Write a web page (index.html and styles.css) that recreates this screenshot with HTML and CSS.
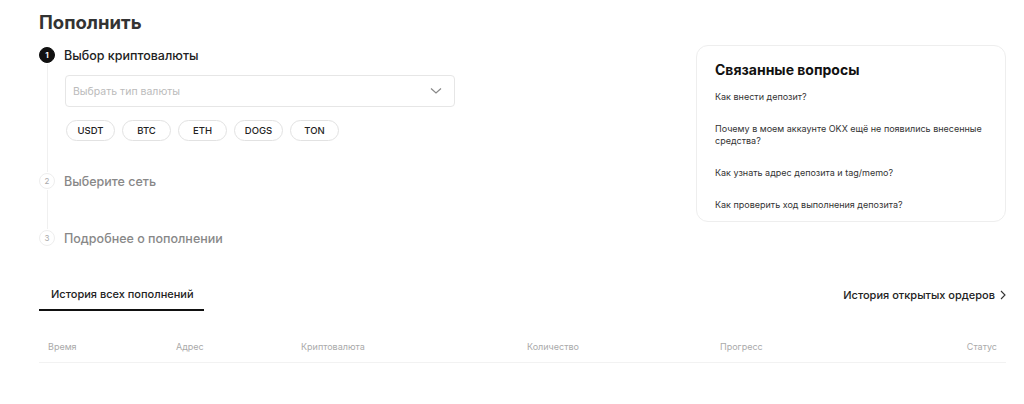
FILE: index.html
```html
<!DOCTYPE html>
<html lang="ru">
<head>
<meta charset="utf-8">
<link rel="stylesheet" href="styles.css">
</head>
<body>
<div class="page">
  <h1 class="title">Пополнить</h1>
  <div class="top">
    <div class="steps">
      <div class="step">
        <div class="step-head">
          <span class="num active">1</span>
          <span class="step-label active">Выбор криптовалюты</span>
        </div>
        <div class="step-body body1">
          <div class="select">
            <span class="placeholder">Выбрать тип валюты</span>
            <svg class="chev" width="12" height="8" viewBox="0 0 12 8"><path d="M1 1.5 L6 6 L11 1.5" fill="none" stroke="#888" stroke-width="1.2"/></svg>
          </div>
          <div class="chips">
            <span class="chip">USDT</span>
            <span class="chip">BTC</span>
            <span class="chip">ETH</span>
            <span class="chip">DOGS</span>
            <span class="chip">TON</span>
          </div>
        </div>
      </div>
      <div class="step">
        <div class="step-head">
          <span class="num">2</span>
          <span class="step-label">Выберите сеть</span>
        </div>
        <div class="step-body body2"></div>
      </div>
      <div class="step last">
        <div class="step-head">
          <span class="num">3</span>
          <span class="step-label">Подробнее о пополнении</span>
        </div>
      </div>
    </div>
    <div class="card">
      <h2 class="card-title">Связанные вопросы</h2>
      <a class="q">Как внести депозит?</a>
      <a class="q">Почему в моем аккаунте OKX ещё не появились внесенные средства?</a>
      <a class="q">Как узнать адрес депозита и tag/memo?</a>
      <a class="q">Как проверить ход выполнения депозита?</a>
    </div>
  </div>
  <div class="tabs">
    <span class="tab">История всех пополнений</span>
    <span class="open-orders">История открытых ордеров
      <svg width="6" height="10" viewBox="0 0 6 10"><path d="M1 1 L5 5 L1 9" fill="none" stroke="#333" stroke-width="1.1"/></svg>
    </span>
  </div>
  <div class="thead">
    <span>Время</span>
    <span>Адрес</span>
    <span>Криптовалюта</span>
    <span>Количество</span>
    <span>Прогресс</span>
    <span class="right">Статус</span>
  </div>
</div>
</body>
</html>
```

FILE: styles.css
```css
* { box-sizing: border-box; margin: 0; padding: 0; }
html, body { background: #fff; }
body {
  font-family: Inter, "Noto Sans", "Liberation Sans", sans-serif;
  color: #222;
}
.page {
  padding: 11px 18px 0 39px;
}
.title {
  font-size: 18.5px;
  font-weight: 700;
  color: #333;
  line-height: 22px;
}
.top {
  display: flex;
  justify-content: space-between;
  margin-top: 13px;
}
.steps {
  width: 416px;
}
.step {
  display: flex;
  flex-direction: column;
}
.step-head {
  display: flex;
  align-items: center;
  gap: 9px;
  height: 18px;
}
.num {
  width: 16px;
  height: 16px;
  border-radius: 50%;
  border: 1px solid #eee;
  color: #aaa;
  font-size: 8px;
  display: flex;
  align-items: center;
  justify-content: center;
  flex-shrink: 0;
}
.num.active {
  background: #111;
  border-color: #111;
  color: #fff;
  font-weight: 700;
}
.step-label {
  font-size: 12.5px;
  color: #888;
  font-weight: 500;
}
.step-label.active { color: #222; }
.step-body {
  margin-left: 8px;
  border-left: 1px solid #f0f0f0;
  padding-left: 17px;
}
.body1 { padding-top: 11px; padding-bottom: 31px; }
.body2 { height: 39px; }
.select {
  height: 32px;
  border: 1px solid #e6e6e6;
  border-radius: 4px;
  display: flex;
  align-items: center;
  justify-content: space-between;
  padding: 0 12px 0 7px;
}
.placeholder {
  font-size: 10.5px;
  color: #bbb;
}
.chips {
  display: flex;
  gap: 7px;
  margin-top: 13px;
  padding-left: 1px;
}
.chip {
  width: 49px;
  height: 21px;
  border: 1px solid #e2e2e2;
  border-radius: 11px;
  font-size: 9.5px;
  font-weight: 500;
  display: flex;
  align-items: center;
  justify-content: center;
  color: #222;
}
.card {
  width: 310px;
  height: 177px;
  margin-top: -1px;
  border: 1px solid #eee;
  border-radius: 12px;
  padding: 15px 18px 0 18px;
  display: flex;
  flex-direction: column;
}
.card-title {
  font-size: 14px;
  font-weight: 700;
  color: #111;
  line-height: 18px;
  margin-bottom: 12px;
}
.q {
  font-size: 9px;
  line-height: 12px;
  color: #333;
  margin-bottom: 20px;
}
.tabs {
  display: flex;
  justify-content: space-between;
  align-items: flex-start;
  margin-top: 40px;
}
.tab {
  font-size: 11px;
  font-weight: 500;
  color: #222;
  padding: 0 12px 8px 12px;
  border-bottom: 2px solid #111;
  width: 165px;
  white-space: nowrap;
}
.open-orders {
  font-size: 11px;
  font-weight: 500;
  color: #222;
  display: flex;
  align-items: center;
  gap: 5px;
  margin-top: 1px;
  white-space: nowrap;
}
.thead {
  display: grid;
  grid-template-columns: 128px 125px 226px 193px 1fr 1fr;
  margin-top: 30px;
  padding: 0 9px 10px 9px;
  border-bottom: 1px solid #f2f2f2;
  font-size: 9px;
  color: #aaa;
}
.thead .right { text-align: right; }
```
